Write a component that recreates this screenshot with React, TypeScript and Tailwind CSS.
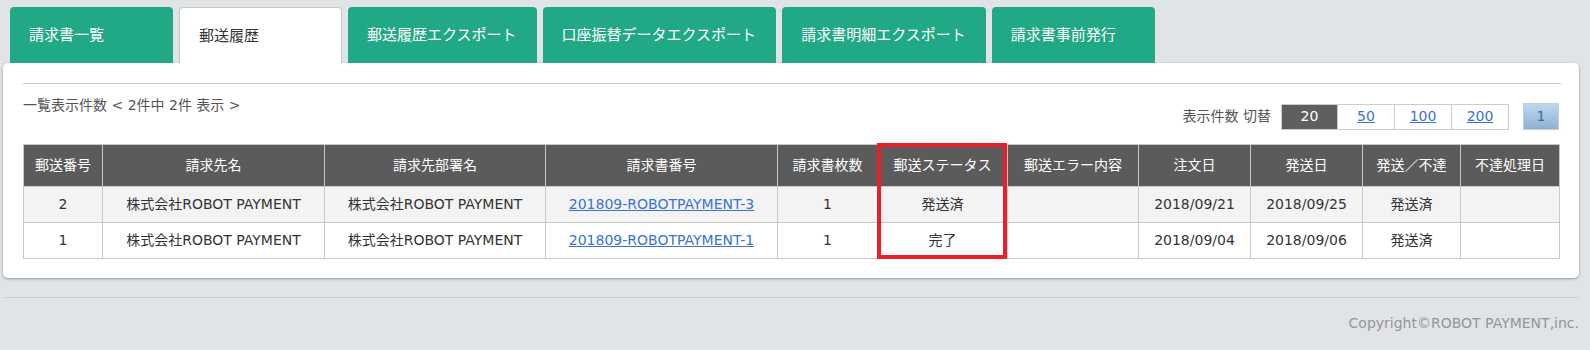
import React from 'react'

const tabs = [
  { label: '請求書一覧', active: false },
  { label: '郵送履歴', active: true },
  { label: '郵送履歴エクスポート', active: false },
  { label: '口座振替データエクスポート', active: false },
  { label: '請求書明細エクスポート', active: false },
  { label: '請求書事前発行', active: false },
]

const columns = [
  { label: '郵送番号', width: 79 },
  { label: '請求先名', width: 222 },
  { label: '請求先部署名', width: 221 },
  { label: '請求書番号', width: 232 },
  { label: '請求書枚数', width: 100 },
  { label: '郵送ステータス', width: 130 },
  { label: '郵送エラー内容', width: 131 },
  { label: '注文日', width: 112 },
  { label: '発送日', width: 112 },
  { label: '発送／不達', width: 98 },
  { label: '不達処理日', width: 99 },
]

const rows = [
  {
    no: '2',
    name: '株式会社ROBOT PAYMENT',
    dept: '株式会社ROBOT PAYMENT',
    invoice: '201809-ROBOTPAYMENT-3',
    count: '1',
    status: '発送済',
    error: '',
    ordered: '2018/09/21',
    sent: '2018/09/25',
    result: '発送済',
    returned: '',
  },
  {
    no: '1',
    name: '株式会社ROBOT PAYMENT',
    dept: '株式会社ROBOT PAYMENT',
    invoice: '201809-ROBOTPAYMENT-1',
    count: '1',
    status: '完了',
    error: '',
    ordered: '2018/09/04',
    sent: '2018/09/06',
    result: '発送済',
    returned: '',
  },
]

const font = { fontFamily: '"DejaVu Sans", "Noto Sans CJK JP", sans-serif' }

export default function App() {
  return (
    <div
      className="min-h-[350px] bg-[#e1e4e7] pt-[7px] pl-[3px] pr-[11px] text-[#333]"
      style={font}
    >
      {/* Tabs */}
      <div className="flex gap-[6px] pl-[7px] h-[56px]">
        {tabs.map((tab) =>
          tab.active ? (
            <div
              key={tab.label}
              className="relative z-10 min-w-[163px] h-[57px] pl-[19px] pr-[19px] flex items-center bg-white border border-b-0 border-[#c8c8c8] rounded-t-[4px] text-[15px] text-[#333]"
            >
              {tab.label}
            </div>
          ) : (
            <div
              key={tab.label}
              className="min-w-[163px] h-[56px] pl-[19px] pr-[20px] flex items-center bg-[#21a886] rounded-t-[4px] text-[15px] text-white"
            >
              {tab.label}
            </div>
          )
        )}
      </div>

      {/* Panel */}
      <div className="bg-white rounded-[5px] shadow-[0_1px_3px_rgba(0,0,0,0.35)] pl-[20px] pr-[18px] pt-[20px] pb-[19px]">
        <div className="border-t border-[#cccccc]" />

        <div className="flex justify-between items-start mt-[12px] pr-[2px]">
          <div className="text-[14px] leading-[18px] text-[#555]">
            一覧表示件数 &lt; 2件中 2件 表示 &gt;
          </div>
          <div className="flex items-center mt-[7px]">
            <span className="text-[14px] text-[#555] mr-[10px]">表示件数 切替</span>
            <div className="flex border border-[#cccccc] h-[26px]">
              <span className="w-[55px] flex items-center justify-center bg-[#5f5f5f] text-white text-[14px]">
                20
              </span>
              {['50', '100', '200'].map((n) => (
                <a
                  key={n}
                  className="w-[57px] flex items-center justify-center border-l border-[#cccccc] text-[14px] text-[#3a72d4] underline"
                >
                  {n}
                </a>
              ))}
            </div>
            <span className="ml-[14px] w-[36px] h-[27px] flex items-center justify-center border border-[#c5cfd8] bg-gradient-to-b from-[#bcd8ee] to-[#8fb1d4] text-[14px] text-[#3a6ea8]">
              1
            </span>
          </div>
        </div>

        {/* Table */}
        <div className="relative mt-[14px] w-[1536px]">
          <table className="w-[1536px] border-collapse table-fixed text-[14px]">
            <colgroup>
              {columns.map((c) => (
                <col key={c.label} style={{ width: c.width }} />
              ))}
            </colgroup>
            <thead>
              <tr className="h-[42px] bg-[#5b5b5b] text-white">
                {columns.map((c) => (
                  <th key={c.label} className="border border-[#c8c8c8] font-normal text-center px-0">
                    {c.label}
                  </th>
                ))}
              </tr>
            </thead>
            <tbody>
              {rows.map((r, i) => (
                <tr key={r.no} className={`h-[36px] ${i === 0 ? 'bg-[#f3f3f3]' : 'bg-white'}`}>
                  <td className="border border-[#c8c8c8] text-center">{r.no}</td>
                  <td className="border border-[#c8c8c8] text-center">{r.name}</td>
                  <td className="border border-[#c8c8c8] text-center">{r.dept}</td>
                  <td className="border border-[#c8c8c8] text-center">
                    <a className="text-[#3a72d4] underline">{r.invoice}</a>
                  </td>
                  <td className="border border-[#c8c8c8] text-center">{r.count}</td>
                  <td className="border border-[#c8c8c8] text-center">{r.status}</td>
                  <td className="border border-[#c8c8c8] text-center">{r.error}</td>
                  <td className="border border-[#c8c8c8] text-center">{r.ordered}</td>
                  <td className="border border-[#c8c8c8] text-center">{r.sent}</td>
                  <td className="border border-[#c8c8c8] text-center">{r.result}</td>
                  <td className="border border-[#c8c8c8] text-center">{r.returned}</td>
                </tr>
              ))}
            </tbody>
          </table>
          {/* highlight box around status column */}
          <div className="absolute left-[854px] top-[-1px] w-[130px] h-[116px] border-[4px] border-[#e8202a] pointer-events-none" />
        </div>
      </div>

      {/* Footer */}
      <div className="mt-[19px] ml-[1px] border-t border-[#cdd0d3] pt-[15px] text-right text-[14px] text-[#959595]">
        Copyright©ROBOT PAYMENT,inc.
      </div>
    </div>
  )
}
